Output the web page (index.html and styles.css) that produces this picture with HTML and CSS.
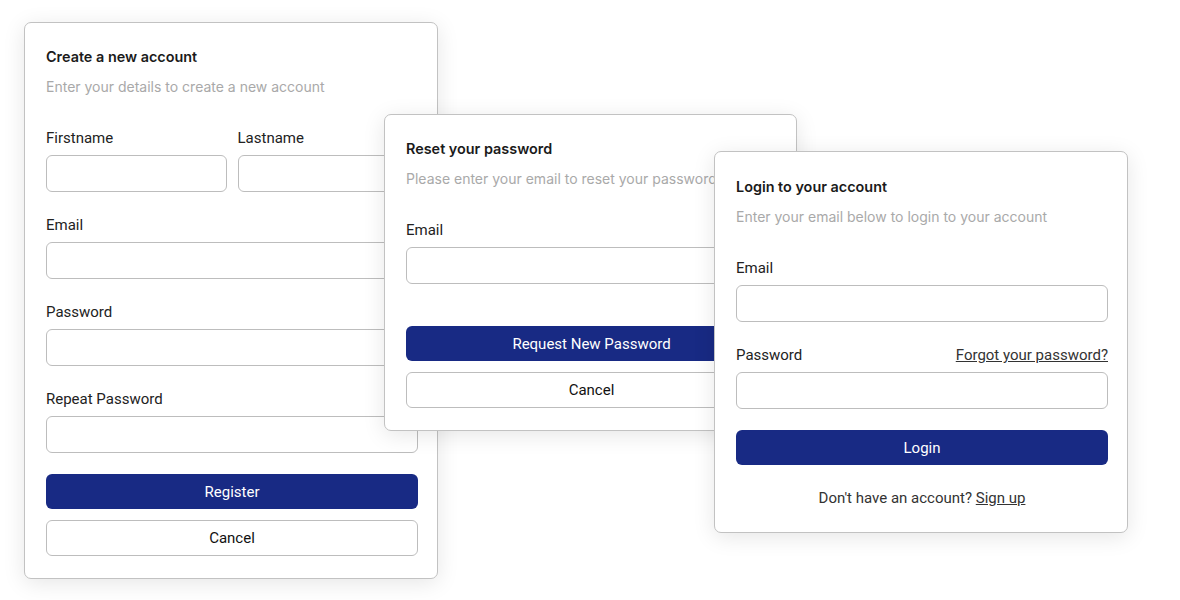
FILE: index.html
```html
<!DOCTYPE html>
<html lang="en">
<head>
    <meta charset="UTF-8">
    <meta name="viewport" content="width=device-width, initial-scale=1.0">
    <title>Auth Forms</title>
    <link rel="stylesheet" href="styles.css">
</head>
<body>
  <div class="canvas">

    <!-- Register -->
    <form class="card card-register">
      <h2 class="card-title">Create a new account</h2>
      <p class="card-subtitle">Enter your details to create a new account</p>

      <div class="row">
        <div class="field">
          <label>Firstname</label>
          <input type="text">
        </div>
        <div class="field">
          <label>Lastname</label>
          <input type="text">
        </div>
      </div>
      <div class="field">
        <label>Email</label>
        <input type="email">
      </div>
      <div class="field">
        <label>Password</label>
        <input type="password">
      </div>
      <div class="field">
        <label>Repeat Password</label>
        <input type="password">
      </div>

      <div class="actions">
        <button type="button" class="btn btn-primary">Register</button>
        <button type="button" class="btn btn-outline">Cancel</button>
      </div>
    </form>

    <!-- Reset password -->
    <form class="card card-reset">
      <h2 class="card-title">Reset your password</h2>
      <p class="card-subtitle">Please enter your email to reset your password</p>

      <div class="field">
        <label>Email</label>
        <input type="email">
      </div>

      <div class="actions actions-wide">
        <button type="button" class="btn btn-primary">Request New Password</button>
        <button type="button" class="btn btn-outline">Cancel</button>
      </div>
    </form>

    <!-- Login -->
    <form class="card card-login">
      <h2 class="card-title">Login to your account</h2>
      <p class="card-subtitle">Enter your email below to login to your account</p>

      <div class="field">
        <label>Email</label>
        <input type="email">
      </div>
      <div class="field">
        <div class="label-row">
          <label>Password</label>
          <a href="#" class="link">Forgot your password?</a>
        </div>
        <input type="password">
      </div>

      <div class="actions">
        <button type="button" class="btn btn-primary">Login</button>
      </div>

      <p class="footer-text">Don't have an account? <a href="#" class="link">Sign up</a></p>
    </form>

  </div>
</body>
</html>
```

FILE: styles.css
```css
body {
    margin: 0;
    background-color: #ffffff;
    font-family: 'Roboto', 'Liberation Sans', sans-serif;
    color: #222222;
}

.canvas {
    position: relative;
    width: 1180px;
    height: 600px;
    overflow: hidden;
}

/* cards sit on the canvas like stacked windows */
.card {
    position: absolute;
    box-sizing: border-box;
    width: 414px;
    margin: 0;
    padding: 24px 19px 22px 21px;
    background-color: #ffffff;
    border: 1px solid #c2c2c2;
    border-radius: 7px;
    box-shadow: 0 4px 22px rgba(0, 0, 0, 0.10);
    overflow: hidden;
}

.card-register {
    left: 24px;
    top: 22px;
    z-index: 1;
}

.card-reset {
    left: 384px;
    top: 114px;
    width: 413px;
    z-index: 2;
}

.card-login {
    left: 714px;
    top: 151px;
    padding-top: 25px;
    z-index: 3;
}

.card-title {
    margin: 0;
    font-family: 'Inter', sans-serif;
    font-size: 14.4px;
    font-weight: 600;
    line-height: 20px;
    color: #1a1a1a;
}

.card-subtitle {
    margin: 10px 0 31px;
    font-family: 'Inter', sans-serif;
    font-size: 14px;
    line-height: 20px;
    color: #a9a9a9;
    white-space: nowrap;
}

.row {
    display: grid;
    grid-template-columns: 1fr 1fr;
    gap: 11px;
}

.field {
    display: flex;
    flex-direction: column;
    margin-bottom: 23px;
}

.field label {
    display: block;
    margin-bottom: 7px;
    font-size: 15px;
    line-height: 20px;
    color: #222222;
}

.label-row {
    display: flex;
    justify-content: space-between;
    align-items: baseline;
}

.field input {
    box-sizing: border-box;
    width: 100%;
    height: 37px;
    padding: 0 10px;
    border: 1px solid #bdbdbd;
    border-radius: 6px;
    background-color: #ffffff;
    font-family: inherit;
    font-size: 15px;
    outline: none;
}

/* collapses with the last field's bottom margin */
.actions {
    display: flex;
    flex-direction: column;
    gap: 11px;
    margin-top: -2px;
}

/* the reset form leaves a wider gap above its buttons */
.card .actions-wide {
    margin-top: 42px;
}

.btn {
    box-sizing: border-box;
    width: 100%;
    height: 35px;
    border-radius: 6px;
    font-family: 'Roboto', sans-serif;
    font-size: 15px;
    cursor: pointer;
}

.btn-primary {
    border: none;
    background-color: #182a84;
    color: #ffffff;
}

.btn-outline {
    height: 36px;
    border: 1px solid #bdbdbd;
    background-color: #ffffff;
    color: #111111;
}

.link {
    color: #333333;
    font-size: 15px;
    text-decoration: underline;
}

.footer-text {
    margin: 23px 0 2px;
    text-align: center;
    font-size: 15px;
    line-height: 20px;
    color: #333333;
}
```
